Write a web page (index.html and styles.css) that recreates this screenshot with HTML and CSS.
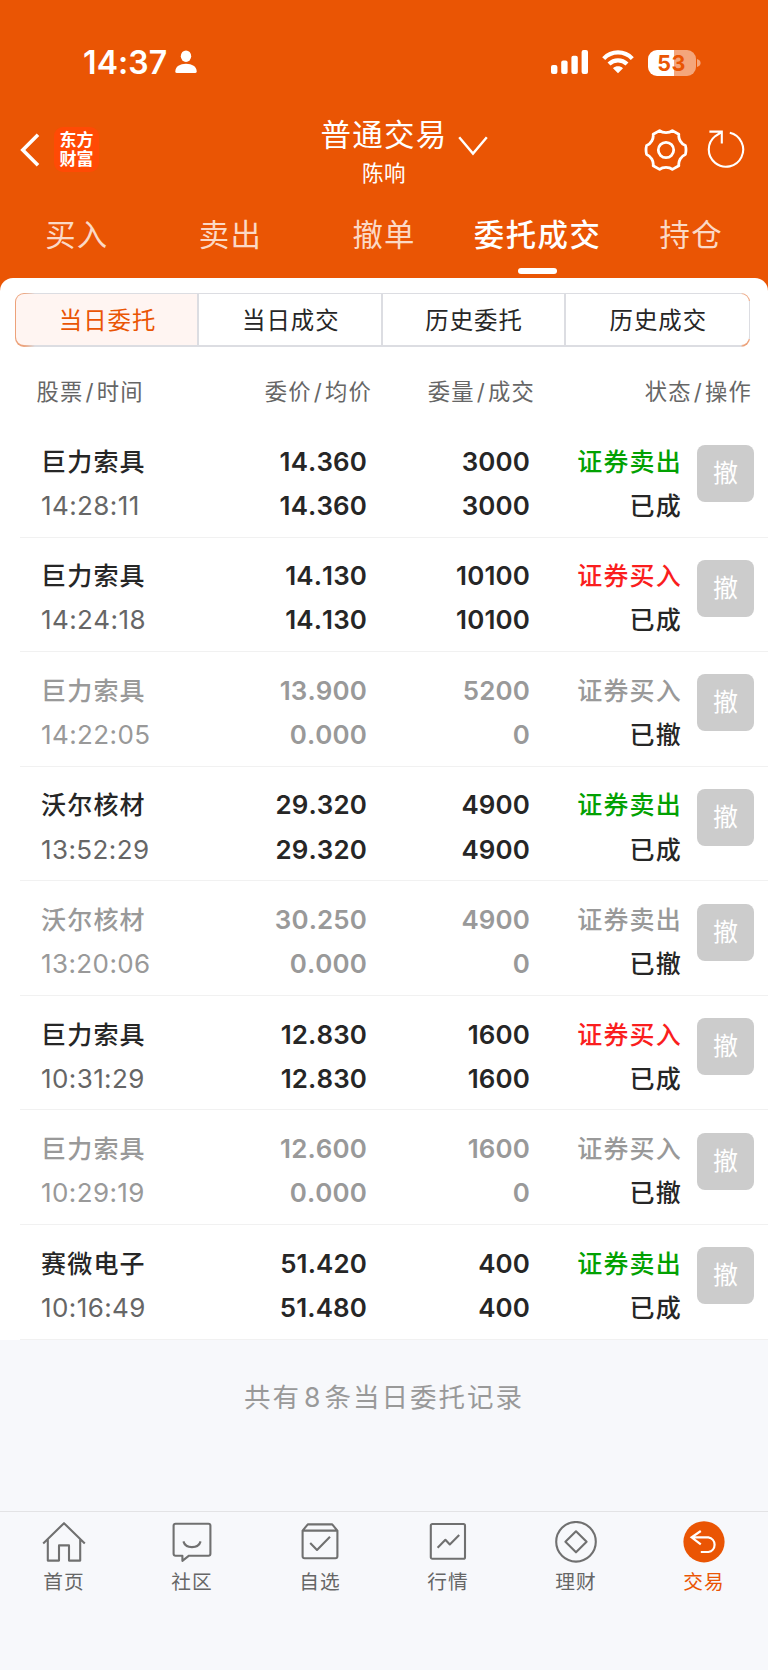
FILE: index.html
```html
<!DOCTYPE html>
<html lang="zh-CN">
<head>
<meta charset="utf-8">
<title>普通交易</title>
<link rel="stylesheet" href="styles.css">
</head>
<body>
<div class="app">
  <header class="header">
    <div class="statusbar">
      <div class="clock"><span>14:37</span>
        <svg class="person" width="22" height="24" viewBox="0 0 22 24" fill="#fff"><ellipse cx="11" cy="6.2" rx="5.2" ry="5.8"/><path d="M0.3 21.4C0.3 16.6 5 13.8 11 13.8S21.7 16.6 21.7 21.4Q21.7 23 20 23H2Q0.3 23 0.3 21.4Z"/></svg>
      </div>
      <div class="signals">
        <svg width="38" height="24" viewBox="0 0 38 24" fill="#fff"><rect x="0" y="15" width="6.4" height="9" rx="2"/><rect x="10.2" y="10.5" width="6.4" height="13.5" rx="2"/><rect x="20.4" y="5.8" width="6.4" height="18.2" rx="2"/><rect x="30.6" y="0" width="6.4" height="24" rx="2"/></svg>
        <svg class="wifi" width="32" height="24" viewBox="0 0 32 24" fill="none" stroke="#fff" stroke-width="4.2"><path d="M1.7 8.6C9.5 0.4 22.5 0.4 30.3 8.6"/><path d="M7 14.1C12.2 9 19.8 9 25 14.1"/><path d="M16 23.2L11 18.2C13.8 15.6 18.2 15.6 21 18.2Z" fill="#fff" stroke="none"/></svg>
        <div class="battery"><span>53</span></div>
        <svg class="batcap" width="4" height="8" viewBox="0 0 4 8"><path d="M0 0Q3.6 1.2 3.6 4T0 8Z" fill="#f4a67c"/></svg>
      </div>
    </div>
    <div class="navbar">
      <div class="nav-left">
        <svg width="20" height="34" viewBox="0 0 20 34" fill="none" stroke="#fff" stroke-width="3.6"><path d="M18 1.8L2.8 17L18 32.2"/></svg>
        <div class="logo"><span>东方</span><span>财富</span></div>
      </div>
      <div class="nav-title">
        <div class="title">普通交易</div>
        <div class="user">陈响</div>
      </div>
      <svg class="chevron" width="30" height="20" viewBox="0 0 30 20" fill="none" stroke="#fff" stroke-width="2.4"><path d="M1.2 1.2L15 17.6L28.8 1.2"/></svg>
      <div class="nav-right">
        <svg width="44" height="44" viewBox="0 0 44 44" fill="none" stroke="#fff" stroke-width="2.8" stroke-linejoin="round"><circle cx="22" cy="22" r="7.7"/><path d="M15.6 2.6C18.8 5.2 25.2 5.2 28.4 2.6L34.8 6.3C34.2 10.8 37 15.8 41.4 17.5Q42.6 22 41.4 26.5C37 28.2 34.2 33.2 34.8 37.7L28.4 41.4C25.2 38.8 18.8 38.8 15.6 41.4L9.2 37.7C9.8 33.2 7 28.2 2.6 26.5Q1.4 22 2.6 17.5C7 15.8 9.8 10.8 9.2 6.3Z"/></svg>
        <svg class="refresh" width="38" height="38" viewBox="0 0 38 38" fill="none" stroke="#fff" stroke-width="2.1"><path d="M22.8 2.8A17.2 17.2 0 1 1 8.4 6L14.6 2M2.4 1.6H14.8V13.4"/></svg>
      </div>
    </div>
    <nav class="tabs">
      <div class="tab">买入</div>
      <div class="tab">卖出</div>
      <div class="tab">撤单</div>
      <div class="tab active">委托成交</div>
      <div class="tab">持仓</div>
    </nav>
  </header>
  <main class="panel">
    <div class="segments">
      <div class="seg on">当日委托</div>
      <div class="seg">当日成交</div>
      <div class="seg">历史委托</div>
      <div class="seg">历史成交</div>
    </div>
    <div class="cols heads"><div>股票<i>/</i>时间</div><div>委价<i>/</i>均价</div><div>委量<i>/</i>成交</div><div>状态<i>/</i>操作</div></div>
    <div class="row"><div class="stock"><b>巨力索具</b><span>14:28:11</span></div><div class="num"><b>14.360</b><b>14.360</b></div><div class="num"><b>3000</b><b>3000</b></div><div class="state"><b class="sell">证券卖出</b><b>已成</b></div><div class="btn">撤</div></div>
    <div class="row"><div class="stock"><b>巨力索具</b><span>14:24:18</span></div><div class="num"><b>14.130</b><b>14.130</b></div><div class="num"><b>10100</b><b>10100</b></div><div class="state"><b class="buy">证券买入</b><b>已成</b></div><div class="btn">撤</div></div>
    <div class="row off"><div class="stock"><b>巨力索具</b><span>14:22:05</span></div><div class="num"><b>13.900</b><b>0.000</b></div><div class="num"><b>5200</b><b>0</b></div><div class="state"><b class="gone">证券买入</b><b>已撤</b></div><div class="btn">撤</div></div>
    <div class="row"><div class="stock"><b>沃尔核材</b><span>13:52:29</span></div><div class="num"><b>29.320</b><b>29.320</b></div><div class="num"><b>4900</b><b>4900</b></div><div class="state"><b class="sell">证券卖出</b><b>已成</b></div><div class="btn">撤</div></div>
    <div class="row off"><div class="stock"><b>沃尔核材</b><span>13:20:06</span></div><div class="num"><b>30.250</b><b>0.000</b></div><div class="num"><b>4900</b><b>0</b></div><div class="state"><b class="gone">证券卖出</b><b>已撤</b></div><div class="btn">撤</div></div>
    <div class="row"><div class="stock"><b>巨力索具</b><span>10:31:29</span></div><div class="num"><b>12.830</b><b>12.830</b></div><div class="num"><b>1600</b><b>1600</b></div><div class="state"><b class="buy">证券买入</b><b>已成</b></div><div class="btn">撤</div></div>
    <div class="row off"><div class="stock"><b>巨力索具</b><span>10:29:19</span></div><div class="num"><b>12.600</b><b>0.000</b></div><div class="num"><b>1600</b><b>0</b></div><div class="state"><b class="gone">证券买入</b><b>已撤</b></div><div class="btn">撤</div></div>
    <div class="row"><div class="stock"><b>赛微电子</b><span>10:16:49</span></div><div class="num"><b>51.420</b><b>51.480</b></div><div class="num"><b>400</b><b>400</b></div><div class="state"><b class="sell">证券卖出</b><b>已成</b></div><div class="btn">撤</div></div>
  </main>
  <div class="summary">共有<i>8</i>条当日委托记录</div>
  <footer class="bottombar">
    <div class="item"><svg width="44" height="44" viewBox="0 0 44 44"><path d="M1.2 22.5L22 2.2L42.8 22.5M5.8 18.6V39.6H17V24.4H27V39.6H38.2V18.6"/></svg><span>首页</span></div>
    <div class="item"><svg width="44" height="44" viewBox="0 0 44 44"><path d="M5.6 2.8H38.4Q40.4 2.8 40.4 4.8V32.7Q40.4 34.7 38.4 34.7H19L12.4 39.8V34.7H5.6Q3.6 34.7 3.6 32.7V4.8Q3.6 2.8 5.6 2.8ZM13.4 20.4C15.6 28 28.4 28 30.6 20.4"/></svg><span>社区</span></div>
    <div class="item"><svg width="44" height="44" viewBox="0 0 44 44"><path d="M4.6 9.6L9.8 3.4H34.2L39.4 9.6V35.2Q39.4 37.2 37.4 37.2H6.6Q4.6 37.2 4.6 35.2ZM4.6 9.6H39.4M12.2 22L19 29L32 15.8"/></svg><span>自选</span></div>
    <div class="item"><svg width="44" height="44" viewBox="0 0 44 44"><rect x="4.8" y="3" width="34.2" height="34.8" rx="1.6"/><path d="M11.6 26.8L19.4 18.8L23.8 23.4L33.2 14"/></svg><span>行情</span></div>
    <div class="item"><svg width="44" height="44" viewBox="0 0 44 44"><circle cx="22" cy="20.8" r="19.8"/><path d="M22 10.3L32.6 20.8L22 31.3L11.4 20.8Z"/></svg><span>理财</span></div>
    <div class="item current"><svg width="44" height="44" viewBox="0 0 44 44"><circle class="disc" cx="22" cy="20.8" r="20.6"/><path class="arrow" d="M18.8 10L9.6 16.4L18.8 23.4M9.6 16.4H26.4A7.4 7.4 0 0 1 26.4 31H18.8"/></svg><span>交易</span></div>
  </footer>
</div>
</body>
</html>
```
FILE: styles.css
```css
* { box-sizing: border-box; }
body { margin: 0; background: #f7f8fb; font-family: Inter, "Noto Sans CJK SC", sans-serif; color: #262626; }
b { font-weight: 600; }
i { font-style: normal; }
svg { display: block; flex: none; }
.app { width: 768px; height: 1670px; display: flex; flex-direction: column; background: #ea5504; overflow: hidden; }
.header { height: 278px; flex: none; color: #fff; }
.statusbar { height: 96px; padding: 29px 67px 0 83px; display: flex; justify-content: space-between; align-items: center; }
.clock { display: flex; align-items: center; font-size: 32px; font-weight: 600; line-height: 40px; letter-spacing: 0.1px; }
.person { margin: -1px 0 0 8px; }
.signals { display: flex; align-items: center; }
.signals > svg { margin-top: -1px; }
.signals .wifi { margin: -1px 14px 0 13px; }
.battery { width: 48px; height: 26px; border-radius: 9px; background: linear-gradient(90deg, #fff 0 26px, #f4a67c 26px); color: #ea5504; font-size: 21.5px; font-weight: 700; line-height: 26px; letter-spacing: 0.4px; text-align: center; }
.signals .batcap { margin: 0 0 0 1.5px; }
.navbar { height: 108px; display: grid; grid-template-columns: 320px 126px 198px 1fr; align-items: start; }
.nav-left { display: flex; align-items: center; padding: 31px 0 0 20px; gap: 14px; }
.logo { width: 45px; height: 45px; border-radius: 9px; background: #ff4a05; display: flex; flex-direction: column; align-items: center; justify-content: center; font-size: 17px; line-height: 19px; font-weight: 700; }
.nav-title { text-align: center; white-space: nowrap; }
.title { font-size: 30.5px; line-height: 44px; letter-spacing: 1.3px; margin: 17px -2px 0 0; }
.user { font-size: 21.5px; line-height: 30px; letter-spacing: 0.5px; margin: 1px -2px 0 0; }
.chevron { margin: 40px 0 0 11.5px; }
.nav-right { display: flex; padding-top: 32px; gap: 19px; }
.refresh { margin-top: 2px; }
.tabs { height: 74px; display: grid; grid-template-columns: repeat(5, 1fr); }
.tab { display: flex; flex-direction: column; align-items: center; font-size: 30.4px; line-height: 44px; letter-spacing: 1.2px; padding-top: 9px; color: #fbd9c6; }
.tab.active { color: #fff; font-weight: 500; letter-spacing: 1.5px; }
.tab.active::after { content: ""; width: 39px; height: 6px; border-radius: 3px; background: #fff; margin-top: 11px; }
.panel { background: #fff; border-radius: 13px 13px 0 0; flex: none; height: 1062px; padding-top: 15px; }
/* Tinted frame: orange round the corners and left edge, grey elsewhere. */
.segments { margin: 0 18px 0 15px; height: 54px; padding: 1px 1px 2px 1px; border-radius: 9px; display: grid; grid-template-columns: repeat(4, 1fr); overflow: hidden; background: linear-gradient(#dcdde2, #dcdde2) 100% 50% / 2px 38px no-repeat, linear-gradient(90deg, #eda27a 0 8px, #dcdde2 20px calc(100% - 9px), #eda27a calc(100% - 7px)); }
.seg { background: #fff; border-right: 2px solid #dcdde2; text-align: center; font-size: 23.4px; line-height: 53px; height: 51px; letter-spacing: 1.1px; padding-left: 2px; }
.seg:first-child { border-radius: 8px 0 0 8px; }
.seg:last-child { border-right: 0; border-radius: 0 8px 8px 0; }
.seg.on { background: #fff5f2; color: #ea5504; }
.cols { display: grid; grid-template-columns: 36.5px 167.5px 168px 163px 217px; }
.heads { height: 76px; padding-top: 25px; color: #666; font-size: 22.3px; line-height: 40px; letter-spacing: 1.2px; text-align: right; white-space: nowrap; }
.heads div:first-child { grid-column: 2; text-align: left; }
.heads i { margin: 0 2px; }
.row { height: 114.57px; display: grid; grid-template-columns: 21px 124px 202px 163px 152px 1fr; padding: 16.7px 0 0 20px; align-items: start; background: linear-gradient(#f1f1f1, #f1f1f1) 20px 100% / 100% 1px no-repeat; }
.row b, .row span { display: block; line-height: 44.2px; white-space: nowrap; }
.stock { grid-column: 2; font-size: 25px; letter-spacing: 1.2px; }
.stock b, .state b { font-weight: 500; }
.stock span { font-size: 26px; color: #666; letter-spacing: 0.4px; font-kerning: none; font-feature-settings: "calt" 0; }
.num { text-align: right; font-size: 25.9px; letter-spacing: 0.15px; font-kerning: none; }
.state { text-align: right; font-size: 25px; letter-spacing: 1.2px; }
.btn { width: 57px; height: 57px; margin: 5.6px 0 0 15px; border-radius: 8px; background: #ccc; color: #fff; font-size: 25px; line-height: 57px; text-align: center; }
.sell { color: #02a102; }
.buy { color: #fa1e1e; }
.off .stock b, .off .stock span, .off .num, .gone { color: #999; }
.summary { background: #f7f8fb; flex: 1; padding-top: 35px; text-align: center; font-size: 26.5px; line-height: 44px; letter-spacing: 2px; color: #999; }
.summary i { margin: 0 2px 0 3px; }
.bottombar { background: #f7f8fb; height: 159px; flex: none; border-top: 1px solid #e3e3e5; display: grid; grid-template-columns: repeat(6, 1fr); padding-top: 9px; }
.item { display: flex; flex-direction: column; align-items: center; color: #666; font-size: 19.7px; letter-spacing: 1px; line-height: 30px; }
.item svg { fill: none; stroke: #707070; stroke-width: 2.1; stroke-linejoin: round; margin-bottom: 2px; }
.item .disc { fill: #ea5504; stroke: none; }
.item .arrow { stroke: #fff; stroke-width: 2.2; stroke-linejoin: miter; }
.current { color: #ea5504; }
```
